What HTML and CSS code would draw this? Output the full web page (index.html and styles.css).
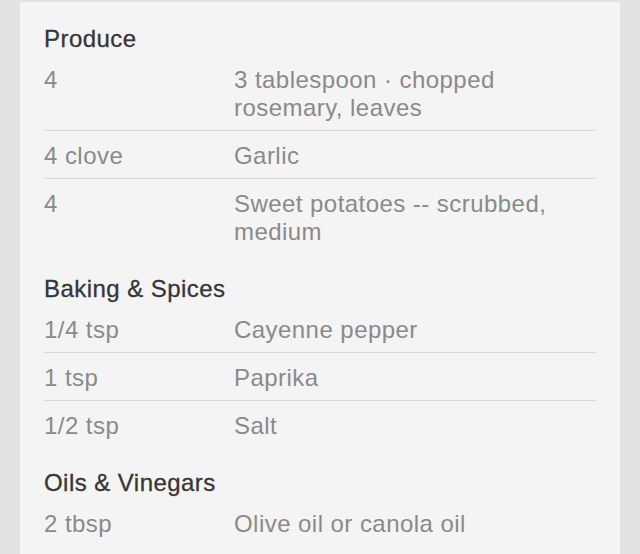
FILE: index.html
```html
<!DOCTYPE html>
<html>
<head>
<meta charset="utf-8">
<link rel="stylesheet" href="styles.css">
</head>
<body>
<div class="card">
  <section class="group">
    <h2 class="group-title">Produce</h2>
    <div class="row"><div class="qty">4</div><div class="name">3 tablespoon · chopped rosemary, leaves</div></div>
    <div class="row"><div class="qty">4 clove</div><div class="name">Garlic</div></div>
    <div class="row"><div class="qty">4</div><div class="name">Sweet potatoes -- scrubbed, medium</div></div>
  </section>
  <section class="group">
    <h2 class="group-title">Baking &amp; Spices</h2>
    <div class="row"><div class="qty">1/4 tsp</div><div class="name">Cayenne pepper</div></div>
    <div class="row"><div class="qty">1 tsp</div><div class="name">Paprika</div></div>
    <div class="row"><div class="qty">1/2 tsp</div><div class="name">Salt</div></div>
  </section>
  <section class="group">
    <h2 class="group-title">Oils &amp; Vinegars</h2>
    <div class="row"><div class="qty">2 tbsp</div><div class="name">Olive oil or canola oil</div></div>
  </section>
</div>
</body>
</html>
```
FILE: styles.css
```css
html, body {
  margin: 0;
  padding: 0;
  background: #e2e2e2;
  height: 100%;
}
body {
  display: flex;
  flex-direction: column;
  font-family: "Liberation Sans", Arial, sans-serif;
  font-size: 24px;
  line-height: 28px;
  letter-spacing: 0.45px;
}
.card {
  flex: 1;
  margin: 2px 20px 0;
  background: #f4f4f4;
  padding: 23px 24px 0;
  overflow: hidden;
}
.group + .group {
  margin-top: 21px;
}
.group-title {
  margin: 0 0 2px;
  font-size: 24px;
  line-height: 28px;
  font-weight: normal;
  color: #363636;
  -webkit-text-stroke: 0.3px #363636;
}
.row {
  display: grid;
  grid-template-columns: 190px 1fr;
  padding: 11px 0 8px;
  border-bottom: 1px solid #d8d8d8;
  color: #8a8a8a;
}
.row:last-child {
  border-bottom: none;
}
```
